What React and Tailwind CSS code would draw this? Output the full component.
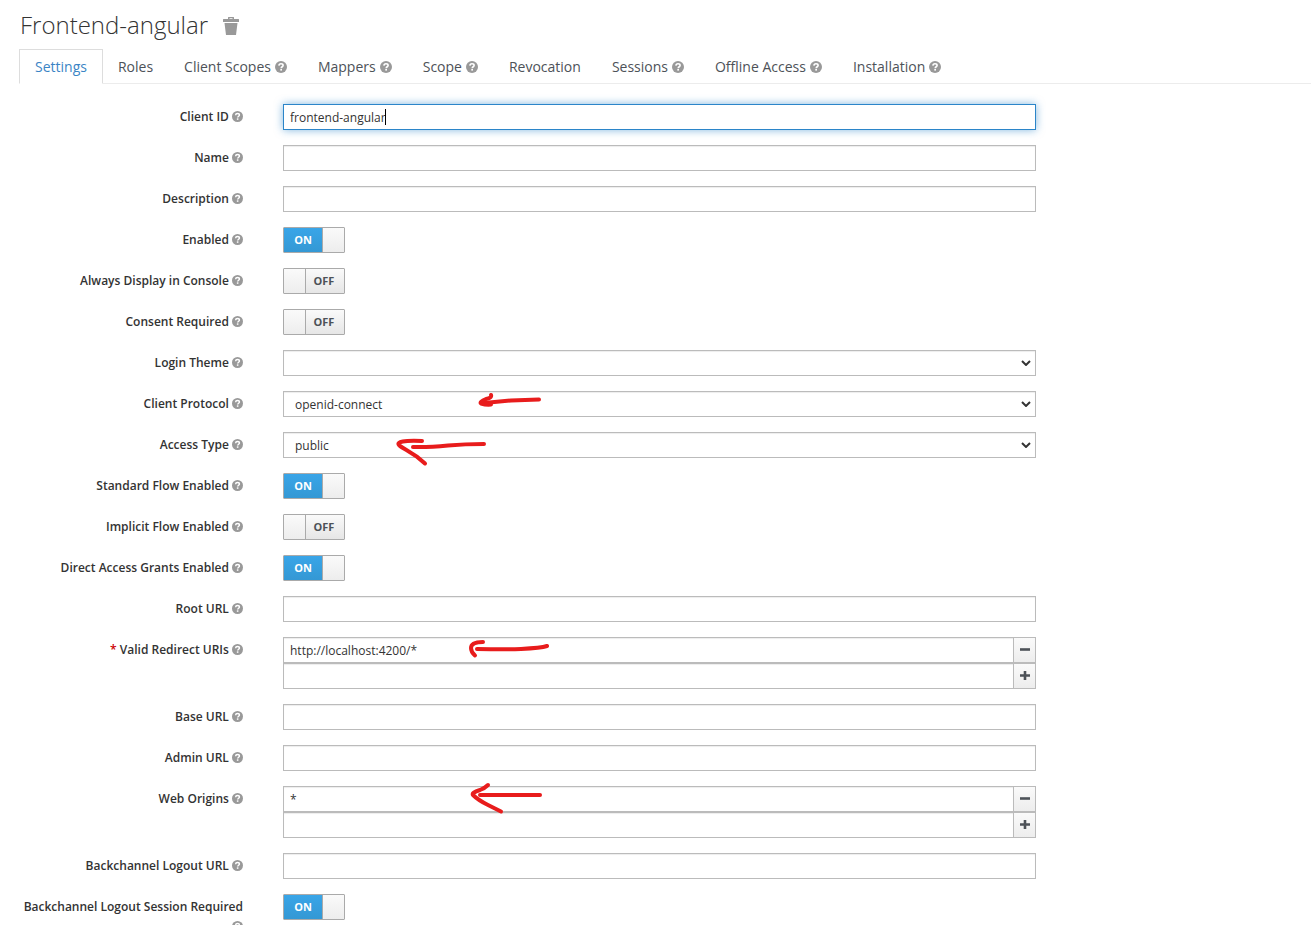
import React, { useState } from "react";

const tabs = [
  { name: "Settings" },
  { name: "Roles" },
  { name: "Client Scopes", help: true },
  { name: "Mappers", help: true },
  { name: "Scope", help: true },
  { name: "Revocation" },
  { name: "Sessions", help: true },
  { name: "Offline Access", help: true },
  { name: "Installation", help: true },
];

const fields = [
  { id: "clientId", label: "Client ID", type: "text", value: "frontend-angular", active: true },
  { id: "name", label: "Name", type: "text" },
  { id: "description", label: "Description", type: "text" },
  { id: "enabled", label: "Enabled", type: "switch", value: true },
  { id: "alwaysDisplay", label: "Always Display in Console", type: "switch" },
  { id: "consentRequired", label: "Consent Required", type: "switch" },
  { id: "loginTheme", label: "Login Theme", type: "select", options: ["", "base", "keycloak"] },
  {
    id: "protocol",
    label: "Client Protocol",
    type: "select",
    options: ["openid-connect", "saml"],
    arrow: ["M256 8.500 L228 9.500 L201 12", "M208 4 Q209 7 203 8 Q196 11 198 12.500 Q203 14 208 13.500"],
  },
  {
    id: "accessType",
    label: "Access Type",
    type: "select",
    options: ["public", "confidential", "bearer-only"],
    arrow: ["M201 12 Q182 12 165 13.500 Q145 15.500 130 15", "M139 9 Q112 8 116 13 C121 18 129 19 142 31.500"],
  },
  { id: "standardFlow", label: "Standard Flow Enabled", type: "switch", value: true },
  { id: "implicitFlow", label: "Implicit Flow Enabled", type: "switch" },
  { id: "directAccess", label: "Direct Access Grants Enabled", type: "switch", value: true },
  { id: "rootUrl", label: "Root URL", type: "text" },
  {
    id: "redirectUris",
    label: "Valid Redirect URIs",
    type: "list",
    required: true,
    value: "http://localhost:4200/*",
    arrow: ["M194 12 Q223 12.500 238 12 Q258 11 264 9", "M200 5 Q188 5 188 11 Q188 15 192 18.500"],
  },
  { id: "baseUrl", label: "Base URL", type: "text" },
  { id: "adminUrl", label: "Admin URL", type: "text" },
  {
    id: "webOrigins",
    label: "Web Origins",
    type: "list",
    value: "*",
    arrow: ["M257 9 H197", "M205 -1 Q202 2 197 4 Q188 7 190 9 Q195 14 205 19 L218 25.500"],
  },
  { id: "backchannelUrl", label: "Backchannel Logout URL", type: "text" },
  {
    id: "backchannelSession",
    label: "Backchannel Logout Session Required",
    type: "switch",
    value: true,
  },
];

const inputClass =
  "block h-[26px] w-full min-w-0 border border-[#bbb] bg-white px-1.5 pt-px text-xs text-[#333] shadow-[inset_0_1px_1px_rgba(0,0,0,0.075)] outline-none";

const HelpIcon = ({ className }) => (
  <svg viewBox="0 0 12 12" className={`inline-block ${className}`} aria-hidden="true">
    <circle cx="6" cy="6" r="6" fill="#999" />
    <path
      d="M3.900 4.600C4 3.300 4.900 2.800 6 2.800c1.300 0 2.100.6 2.100 1.600 0 1.400-1.900 1.300-1.900 2.800"
      fill="none"
      stroke="#fff"
      strokeWidth="1.6"
    />
    <rect x="5.300" y="8" width="1.700" height="1.600" fill="#fff" />
  </svg>
);

const TrashIcon = () => (
  <svg viewBox="0 0 16 18" className="h-[18px] w-4" fill="#999" aria-hidden="true">
    <path d="M5 2V0.500Q5 0 5.500 0h5Q11 0 11 0.500V2h4.500q.5 0 .5.500V5H0V2.500Q0 2 .5 2zM6.500 2h3V1.300h-3z" />
    <path d="M1.500 6h13l-1.500 12H3z" />
  </svg>
);

const Arrow = ({ paths }) => (
  <svg
    className="pointer-events-none absolute top-0 left-0 h-[26px] w-[280px] overflow-visible"
    fill="none"
    stroke="#e81c1c"
    strokeWidth="4"
    strokeLinecap="round"
    strokeLinejoin="round"
    aria-hidden="true"
  >
    {paths.map((d) => (
      <path key={d} d={d} />
    ))}
  </svg>
);

const TextField = ({ field }) => {
  const [value, setValue] = useState(field.value || "");

  return (
    <>
      <input
        id={field.id}
        type="text"
        value={value}
        onChange={(e) => setValue(e.target.value)}
        className={
          field.active
            ? "block h-[26px] w-full border border-[#2b85c9] bg-white px-1.5 pt-px text-xs text-[#333] shadow-[0_0_8px_rgba(43,133,201,0.6)] outline-none"
            : inputClass
        }
      />
      {field.active && (
        <span className="absolute top-[5px] left-[102px] h-4 w-px bg-black" />
      )}
    </>
  );
};

const Switch = ({ field }) => {
  const [on, setOn] = useState(Boolean(field.value));

  return (
    <span className="relative flex h-[26px] w-[62px] overflow-hidden rounded-[1px] border border-[#aaa] text-[11px] leading-6 font-bold">
      <input
        id={field.id}
        type="checkbox"
        checked={on}
        onChange={(e) => setOn(e.target.checked)}
        className="absolute inset-0 z-10 h-full w-full cursor-pointer opacity-0"
      />
      {on ? (
        <>
          <span className="flex-1 bg-linear-to-b from-[#39a5e8] to-[#3498d4] text-center text-white">
            ON
          </span>
          <span className="w-[22px] border-l border-[#aaa] bg-linear-to-b from-[#fafafa] to-[#ededed]" />
        </>
      ) : (
        <>
          <span className="w-[22px] border-r border-[#aaa] bg-linear-to-b from-[#fafafa] to-[#ededed]" />
          <span className="flex-1 bg-linear-to-b from-[#fafafa] to-[#e6e6e6] pr-0.5 text-center text-[#4d5258]">
            OFF
          </span>
        </>
      )}
    </span>
  );
};

const SelectField = ({ field }) => {
  const [value, setValue] = useState(field.options[0]);

  return (
    <>
      <select
        id={field.id}
        value={value}
        onChange={(e) => setValue(e.target.value)}
        className="block h-[26px] w-full appearance-none border border-[#bbb] bg-white px-[11px] pt-[2px] text-xs text-[#333] shadow-[inset_0_1px_1px_rgba(0,0,0,0.075)] outline-none"
      >
        {field.options.map((option) => (
          <option key={option} value={option}>
            {option}
          </option>
        ))}
      </select>
      <svg
        viewBox="0 0 10 6"
        className="pointer-events-none absolute top-[10px] right-[5px] h-[6px] w-[10px]"
        fill="none"
        stroke="#333"
        strokeWidth="2"
        aria-hidden="true"
      >
        <path d="M1 1l4 4 4-4" />
      </svg>
    </>
  );
};

const ListRow = ({ id, label, initial, add }) => {
  const [value, setValue] = useState(initial);

  return (
    <div className="flex">
      <input
        id={id}
        type="text"
        aria-label={label}
        value={value}
        onChange={(e) => setValue(e.target.value)}
        className={inputClass}
      />
      <button
        type="button"
        aria-label={add ? "Add" : "Remove"}
        className="flex h-[26px] w-[22px] shrink-0 items-center justify-center border border-l-0 border-[#bbb] bg-linear-to-b from-[#fafafa] to-[#ededed]"
      >
        <svg viewBox="0 0 10 10" className="h-[10px] w-[10px]" fill="#4d5258" aria-hidden="true">
          <path
            d={
              add
                ? "M3.700 0h2.600v3.200H10v2.600H6.300V9H3.700V5.800H0V3.200h3.700z"
                : "M0 3.200h10v2.600H0z"
            }
          />
        </svg>
      </button>
    </div>
  );
};

const ListField = ({ field }) => (
  <>
    <ListRow id={field.id} label={field.label} initial={field.value} />
    <ListRow id={`${field.id}New`} label={`New ${field.label}`} initial="" add />
  </>
);

const controls = {
  text: TextField,
  switch: Switch,
  select: SelectField,
  list: ListField,
};

const FormRow = ({ field }) => {
  const Control = controls[field.type];

  return (
    <div className="grid grid-cols-[263fr_793fr_255fr]">
      <label
        htmlFor={field.id}
        className="h-[26px] px-5 pt-[3px] text-right text-xs leading-5 font-semibold text-[#333]"
      >
        {field.required && <span className="text-[#c00]">* </span>}
        {field.label} <HelpIcon className="h-[11px] w-[11px] align-[-1px]" />
      </label>
      <div className="px-5">
        <div className="relative">
          <Control field={field} />
          {field.arrow && <Arrow paths={field.arrow} />}
        </div>
      </div>
    </div>
  );
};

const App = () => {
  const [activeTab, setActiveTab] = useState("Settings");

  return (
    <div className="h-screen overflow-hidden bg-white font-['Open_Sans',sans-serif] text-[#333]">
      <header className="flex h-[49px] items-center gap-[15px] px-5">
        <h1 className="text-2xl font-light">Frontend-angular</h1>
        <button type="button" aria-label="Delete client" className="pt-0.5">
          <TrashIcon />
        </button>
      </header>

      <nav className="ml-[19px] flex h-[35px] border-b border-[#ececec]">
        {tabs.map((tab) => (
          <a
            key={tab.name}
            href="#"
            onClick={() => setActiveTab(tab.name)}
            className={`-mr-px h-[35px] border px-[15px] pt-[7px] text-sm leading-5 whitespace-nowrap ${
              activeTab === tab.name
                ? "border-[#ddd] border-b-white bg-white text-[#3a84c5]"
                : "border-transparent text-[#4d5258]"
            }`}
          >
            {tab.name}
            {tab.help && <HelpIcon className="ml-1 h-3 w-3 align-[-1px]" />}
          </a>
        ))}
      </nav>

      <form className="flex flex-col gap-[15px] pt-5">
        {fields.map((field) => (
          <FormRow key={field.id} field={field} />
        ))}
      </form>
    </div>
  );
};

export default App;
